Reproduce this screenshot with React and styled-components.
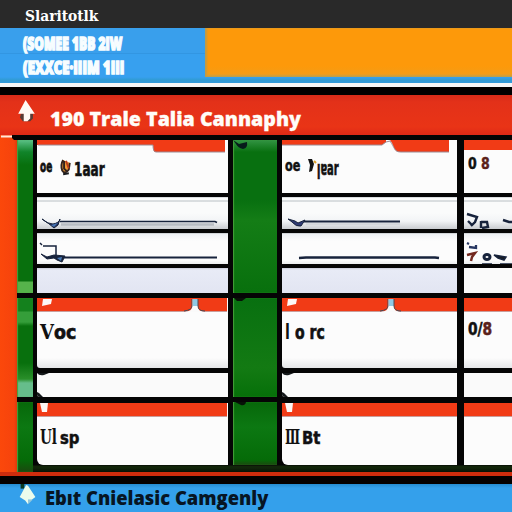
import React from 'react';
import styled, { createGlobalStyle } from 'styled-components';

const Global = createGlobalStyle`
  * { box-sizing: border-box; }
  body { margin: 0; background: #000; overflow: hidden; }
`;

const Page = styled.main`
  width: 512px;
  height: 512px;
  display: flex;
  flex-direction: column;
  overflow: hidden;
  background: #050505;
`;

const TopBar = styled.header`
  flex: 0 0 28px;
  padding: 8px 0 0 25px;
  background: #292929;
`;

const Banner = styled.section`
  flex: 0 0 55px;
  display: flex;
  align-items: flex-start;
  background: linear-gradient(#399fec 0 25px, #3296e2 25px 26px, #37a0ef 26px 49px, #309bd3 52px, #329bdc);
`;

const BannerText = styled.div`
  width: 205px;
  padding: 7px 0 0 23px;
  display: flex;
  flex-direction: column;
  gap: 6px;
`;

const BannerAccent = styled.div`
  flex: 1;
  height: 49px;
  background: linear-gradient(#fd990a 0 38px, #f49c16 46px, #b9a150);
  box-shadow: inset 2px 0 2px #bf9b46;
`;

const TitleBar = styled.section`
  flex: 0 0 52px;
  display: flex;
  align-items: flex-start;
  gap: 15px;
  padding: 13px 0 0 18px;
  border-top: 4px solid #f5f7f7;
  background: linear-gradient(#000 0 8px, #d62b19 8px, #e33119 15px, #e93416 40px, #df2916 48px);
`;

const TitleText = styled.div`
  padding-top: 7px;
`;

const Label = styled.span`
  display: block;
  width: max-content;
  font-family: ${p => p.$face || '"Open Sans", sans-serif'};
  font-weight: ${p => p.$weight || 800};
  font-size: ${p => p.$size}px;
  line-height: ${p => p.$line || p.$size}px;
  color: ${p => p.$color || '#111'};
  white-space: pre;
  transform: scaleX(${p => p.$stretch || 1});
  transform-origin: left;
  -webkit-text-stroke: ${p => p.$stroke || 0}px currentColor;
`;

const Board = styled.section`
  flex: 0 0 337px;
  display: flex;
  background: linear-gradient(#050505 0 330px, #12250a 331px 333px, #081005);
`;

const Edge = styled.div`
  width: 17px;
  position: relative;
  background: linear-gradient(90deg, #fb480b, #f6430c 14px, #dc3b0c);
`;

const Rail = styled.div`
  width: ${p => p.$width}px;
  margin-right: ${p => p.$gap}px;
  padding-top: 5px;
  display: flex;
  flex-direction: column;
  gap: 5px;
`;

const RailCell = styled.div`
  position: relative;
  height: ${p => p.$height}px;
  background: ${p => p.$fill};
  box-shadow: inset 1px 0 1px #45a13a;
`;

const Column = styled.div`
  width: ${p => p.$width}px;
  margin-right: ${p => p.$gap}px;
  padding-top: 5px;
  display: flex;
  flex-direction: column;
`;

const Cell = styled.div`
  position: relative;
  flex: 0 0 ${p => p.$height}px;
  margin-bottom: ${p => p.$rule}px;
  padding: ${p => p.$top || 0}px 0 0 ${p => p.$left || 0}px;
  background: ${p => p.$fill || '#fcfcfc'};
  border-bottom-left-radius: ${p => p.$round || 0}px;
  overflow: hidden;
`;

const Words = styled.div`
  position: relative;
  display: flex;
  align-items: baseline;
  gap: ${p => p.$gap || 0}px;
`;

const TopWordRow = styled.div`
  position: relative;
  display: grid;
  grid-template-columns: ${p => p.$tracks};
  align-items: start;
`;

const Digit = styled.span`
  color: #5b211a;
`;

const Drawing = styled.svg`
  position: absolute;
  inset: 0;
  overflow: visible;
`;

const RailMark = styled(Drawing)`
  width: 44px;
  height: 18px;
`;

const BottomEdge = styled.div`
  flex: 0 0 12px;
  background: linear-gradient(#cf2c0d 0 4px, #050000 4px);
`;

const Footer = styled.footer`
  flex: 0 0 28px;
  display: flex;
  align-items: flex-start;
  gap: 8px;
  padding-left: 19px;
  background: linear-gradient(#258bd0, #34a0eb 4px);
`;

const FooterText = styled.div`
  padding-top: 4px;
`;

const slab = '"DejaVu Serif", serif';
const sans = '"Open Sans", sans-serif';
const narrow = '"DejaVu Sans Condensed", "DejaVu Sans", sans-serif';
const paper = 'linear-gradient(#b9bec3 0, #fbfcfc 1px 3px, #b9c0c4 4px, #fafbfb 5px 16px, #f2f4f6 24px, #c9ccd0)';
const paperLow = 'linear-gradient(#b5b9bc 0, #edf0f3 1px, #fcfcfc 8px 27px, #eceeef)';
const shade = 'linear-gradient(#c9ccda 0, #e8ebf6 2px, #e2e5f2)';
const plain = 'linear-gradient(#fcfcfc 0 60px, #e5e6e8)';
const red = '#f13b16';

function TopTabs({ kind }) {
  return (
    <Drawing width="191" height="53">
      {kind === 0 && <>
        <path d="M0 0H188V12H118Q116 12 116 5H0Z" fill={red} />
        <path d="M1 5H116Q116 12 119 12H188" fill="none" stroke="#9a8b94" />
      </>}
      {kind === 1 && <>
        <path d="M0 0H104V2L100 5H0ZM108 0H167V12H118C111 12 113 6 108 0Z" fill={red} />
        <path d="M0 5H100L104 2L108 1C113 8 112 12 119 12H167" fill="none" stroke="#9a8b94" />
      </>}
      {kind === 2 && <path d="M0 0H48V10H0Z" fill={red} />}
    </Drawing>
  );
}

function LowTabs({ kind, second }) {
  const notch = kind === 0 ? 155 : 106;
  return (
    <Drawing width="191" height="20">
      <rect width={kind === 0 ? 190 : 175} height="13" fill={red} />
      <path d="M0 13.5H190" stroke="#c99d9b" />
      {kind < 2 && <path d={second ? 'M3 0H11L10 9H5Z' : 'M6 1H15L14 6L5 8Z'} fill="#fcf7f5" />}
      {!second && kind < 2 && <>
        <path d={`M${notch - 7} 14Q${notch} 13 ${notch} 9V1H${notch + 6}V9Q${notch + 6} 13 ${notch + 12} 14Z`} fill="#fafafa" />
        <path d={`M${notch + 1} 1H${notch + 6}V8H${notch + 1}Z`} fill="#91c9e4" />
        <path d={`M${notch - 8} 13Q${notch} 12 ${notch} 8V1M${notch + 6} 1V8Q${notch + 6} 13 ${notch + 13} 13`} fill="none" stroke="#4c4852" />
      </>}
    </Drawing>
  );
}

function RuleMarks({ kind, row }) {
  return (
    <Drawing width="191" height="32" fill="none" stroke="#17233c">
      {kind === 0 && row === 0 && <>
        <path d="M23 24.5H178L180 25.5" strokeWidth="1.7" />
        <path d="M24 27.5H177" stroke="#b8bdc3" strokeWidth="2.5" />
        <path d="M5 22Q10 27 16 27Q22 26 23 22L21 28L17 31L11 26Z" fill="#202a56" />
        <path d="M14 28L21 26L17 30Z" fill="#4675b4" stroke="none" />
      </>}
      {kind === 0 && row === 1 && <>
        <path d="M25 24.5H180" strokeWidth="2.2" />
        <path d="M6 13H19V23M3 10L5 12" strokeWidth="1.5" />
        <path d="M4 21L10 24L17 22L28 23L25 29L20 27L17 25L10 26Z" fill="#17233c" />
        <path d="M20 25L25 24L24 28Z" fill="#4879b5" stroke="none" />
      </>}
      {kind === 1 && row === 0 && <>
        <path d="M22 24.5H118" strokeWidth="2" />
        <path d="M6 22L13 24L16 26L23 23L19 29Q14 30 10 25Z" fill="#303b75" />
        <path d="M24 27H118" stroke="#c7cbd0" />
      </>}
      {kind === 1 && row === 1 && <path d="M17 25L24 24.5H153L157 25" strokeWidth="2.4" />}
      {kind === 2 && row === 0 && <>
        <path d="M3 17L13 20L11 25L7 29M4 24L8 28M17 24V31M17 25H23L24 30L18 31M39 23L45 25H48" strokeWidth="2.4" />
      </>}
      {kind === 2 && row === 1 && <>
        <path d="M3 10L5 11M5 14L12 15L12 12" stroke="#263661" strokeWidth="2.3" />
        <path d="M3 22L11 20L8 24L7 28" stroke="#73281e" strokeWidth="2.5" />
        <ellipse cx="23" cy="24" rx="3" ry="2.5" strokeWidth="3" />
        <path d="M18 31H28M30 22L42 24L40 27L34 25ZM36 31H48" fill="#161a20" strokeWidth="1.5" />
      </>}
    </Drawing>
  );
}

function CornerInk({ bottom }) {
  return (
    <Drawing width="16" height="24">
      {bottom
        ? <path d="M0 19L2 20L6 24H0Z" fill="#15191b" />
        : <path d="M0 0H12L7 2Q2 3 0 0Z" fill="#15191b" />}
    </Drawing>
  );
}

function TopWords({ kind }) {
  if (kind === 0) return (
    <TopWordRow $tracks="19px 15px 40px">
      <Label $size={16} $line={16} $face={narrow} $weight={700} $stretch={0.62} $stroke={0.8}>oe</Label>
      <svg width="13" height="19" viewBox="0 0 13 20">
        <path d="M4 1Q1 6 3 12Q6 17 10 11L11 4M5 2V10L8 13" fill="#ef9b35" stroke="#33231d" strokeWidth="2" />
        <path d="M7 2L10 10" stroke="#b93a1b" strokeWidth="2" />
        <path d="M4 16L10 15" stroke="#191b1e" strokeWidth="2" />
      </svg>
      <Label $size={20} $line={20} $face={narrow} $weight={700} $stretch={0.67} $stroke={0.6}>1aar</Label>
    </TopWordRow>
  );
  if (kind === 1) return (
    <TopWordRow $tracks="21px 11px 40px">
      <Label $size={16} $line={17} $face={narrow} $weight={700} $stretch={0.78} $stroke={0.5}>oe</Label>
      <svg width="11" height="18" viewBox="0 0 11 18">
        <path d="M2 2H6L8 7L6 14L3 15L4 8Z" fill="#141414" />
        <path d="M8 4L10 6" stroke="#dfa22b" strokeWidth="2" />
      </svg>
      <Label $size={19} $line={22} $face={narrow} $weight={700} $stretch={0.58} $stroke={0.6}>ꞁɐar</Label>
    </TopWordRow>
  );
  return <Words><Label $size={15} $line={15} $face={narrow} $weight={700} $stretch={0.93} $stroke={0.4}>0 <Digit>8</Digit></Label></Words>;
}

const columns = [
  { width: 191, gap: 5 },
  { width: 175, gap: 7 },
  { width: 48, gap: 0 },
];

function LowWords({ kind }) {
  if (kind === 2) return (
    <Words><Label $size={17} $line={20} $face={narrow} $weight={700} $stretch={.9} $stroke={.5}>0/<Digit>8</Digit></Label></Words>
  );
  return (
    <TopWordRow $tracks={kind ? '10px 35px' : '14px 30px'}>
      <Label $size={kind ? 21 : 20} $line={20} $face={kind ? narrow : slab} $weight={700} $stretch={kind ? .75 : .9}>{kind ? 'l' : 'V'}</Label>
      <Label $size={19} $line={21} $face={narrow} $weight={700} $stretch={kind ? .82 : 1.02} $stroke={.6}>{kind ? 'o rc' : 'oc'}</Label>
    </TopWordRow>
  );
}

function LastWords({ kind }) {
  return (
    <TopWordRow $tracks={kind ? '17px 25px' : '20px 25px'}>
      <Label $size={20} $line={19} $face={slab} $weight={700} $stretch={kind ? .62 : .68}>{kind ? 'Ⅲ' : 'Ul'}</Label>
      <Label $size={17} $line={21} $face={narrow} $weight={700} $stretch={.97} $stroke={.5}>{kind ? 'Bt' : 'sp'}</Label>
    </TopWordRow>
  );
}

function CardColumn({ kind }) {
  const c = columns[kind];
  return (
    <Column $width={c.width} $gap={c.gap}>
      <Cell $height={53} $rule={4} $top={kind === 0 ? 19 : 17} $left={kind === 2 ? 4 : 3}>
        <TopTabs kind={kind} /><TopWords kind={kind} />
      </Cell>
      <Cell $height={32} $rule={4} $fill={paper}><RuleMarks kind={kind} row={0} /></Cell>
      <Cell $height={31} $rule={4} $fill={paperLow}><RuleMarks kind={kind} row={1} /></Cell>
      <Cell $height={25} $rule={5} $fill={kind === 2 ? '#fafafa' : shade} />
      <Cell $height={70} $rule={5} $top={kind === 2 ? 21 : 24} $left={kind === 2 ? 4 : 3} $round={kind === 2 ? 0 : 3} $fill={plain}>
        <LowTabs kind={kind} />
        <LowWords kind={kind} />
      </Cell>
      <Cell $height={24} $rule={6} $round={kind === 2 ? 0 : 3} $fill="#fafafa">
        {kind < 2 && <><CornerInk /><CornerInk bottom /></>}
      </Cell>
      <Cell $height={62} $rule={6} $top={25} $left={3} $round={kind === 2 ? 0 : 6}>
        <LowTabs kind={kind} second />
        {kind < 2 && <LastWords kind={kind} />}
      </Cell>
    </Column>
  );
}

function GreenRail({ wide }) {
  const width = wide ? 44 : 16;
  return (
    <Rail $width={width} $gap={wide ? 5 : 4}>
      <RailCell $height={153} $fill={wide
        ? 'linear-gradient(#329443, #087010 12px 60px, #147d16 80px, #08700d)'
        : 'linear-gradient(#5bc187, #11842a 12px, #08700d 25px 141px, #56b34b 142px)'}>
        {wide && <RailMark><path d="M0 0L6 4L14 2Q15 8 10 9Q5 8 3 4" fill="#071b1b" /></RailMark>}
      </RailCell>
      <RailCell $height={99} $fill={wide
        ? 'linear-gradient(#087010, #137a13 70px, #067009)'
        : 'linear-gradient(#14811d 0 13px, #359e3a 14px 24px, #08700d 28px 65px, #2a8f2a 81px, #66bd8b 85px)'}>
        {wide && <RailMark><path d="M1 0H13L9 3H4Z" fill="#071107" /></RailMark>}
      </RailCell>
      <RailCell $height={wide ? 63 : 70} $fill="linear-gradient(#07680a, #0c7812 25px, #056b08 58px, #1b480f)">
        {wide && <RailMark><path d="M2 0H13Q12 4 8 3Z" fill="#071107" /></RailMark>}
      </RailCell>
    </Rail>
  );
}

function Arrow({ small }) {
  return (
    <svg width={small ? 18 : 17} height={small ? 24 : 24} viewBox="0 0 18 26">
      {small ? <>
        <path d="M1 0H5V5H1Z" fill="#093822" />
        <path d="M7 1L9 2L17 14L13 17H9V22L6 18L0 14Z" fill="#ecfcec" />
        <path d="M9 17H14L9 22Z" fill="#92c7dc" />
      </> : <>
        <path d="M3 15H16V20L13 23H5L2 19Z" fill="#583c35" />
        <path d="M8 0L18 15H13V20L10 23H6V15H0Z" fill="#fffaf5" />
      </>}
    </svg>
  );
}

export default function App() {
  return (
    <>
      <Global />
      <Page>
        <TopBar><Label $size={15} $line={17} $face={slab} $weight={700} $stretch={.92} $color="#fff">Slaritotlk</Label></TopBar>
        <Banner>
          <BannerText>
            <Label $size={17} $line={18} $face={sans} $stretch={.71} $stroke={1.6} $color="#f7fdff">(SOMEE 1BB 2IW</Label>
            <Label $size={17} $line={18} $face={sans} $stretch={.77} $stroke={1.6} $color="#f7fdff">(EXXCE·IIIM 1III</Label>
          </BannerText>
          <BannerAccent />
        </Banner>
        <TitleBar>
          <Arrow />
          <TitleText><Label $size={20} $line={24} $stretch={.98} $stroke={.3} $color="#fffdf8">190 Trale Talia Cannaphy</Label></TitleText>
        </TitleBar>
        <Board>
          <Edge>
            <Drawing width="17" height="5">
              <path d="M12 0H17V5H14L12 3Z" fill="#080404" />
              <path d="M1 1.5H12" stroke="#ffe8dc" strokeWidth="2" />
            </Drawing>
          </Edge>
          <GreenRail /><CardColumn kind={0} />
          <GreenRail wide /><CardColumn kind={1} /><CardColumn kind={2} />
        </Board>
        <BottomEdge />
        <Footer>
          <Arrow small />
          <FooterText><Label $size={19} $line={20} $stretch={.965} $color="#071523">Ebıt Cnielasic Camgenly</Label></FooterText>
        </Footer>
      </Page>
    </>
  );
}
